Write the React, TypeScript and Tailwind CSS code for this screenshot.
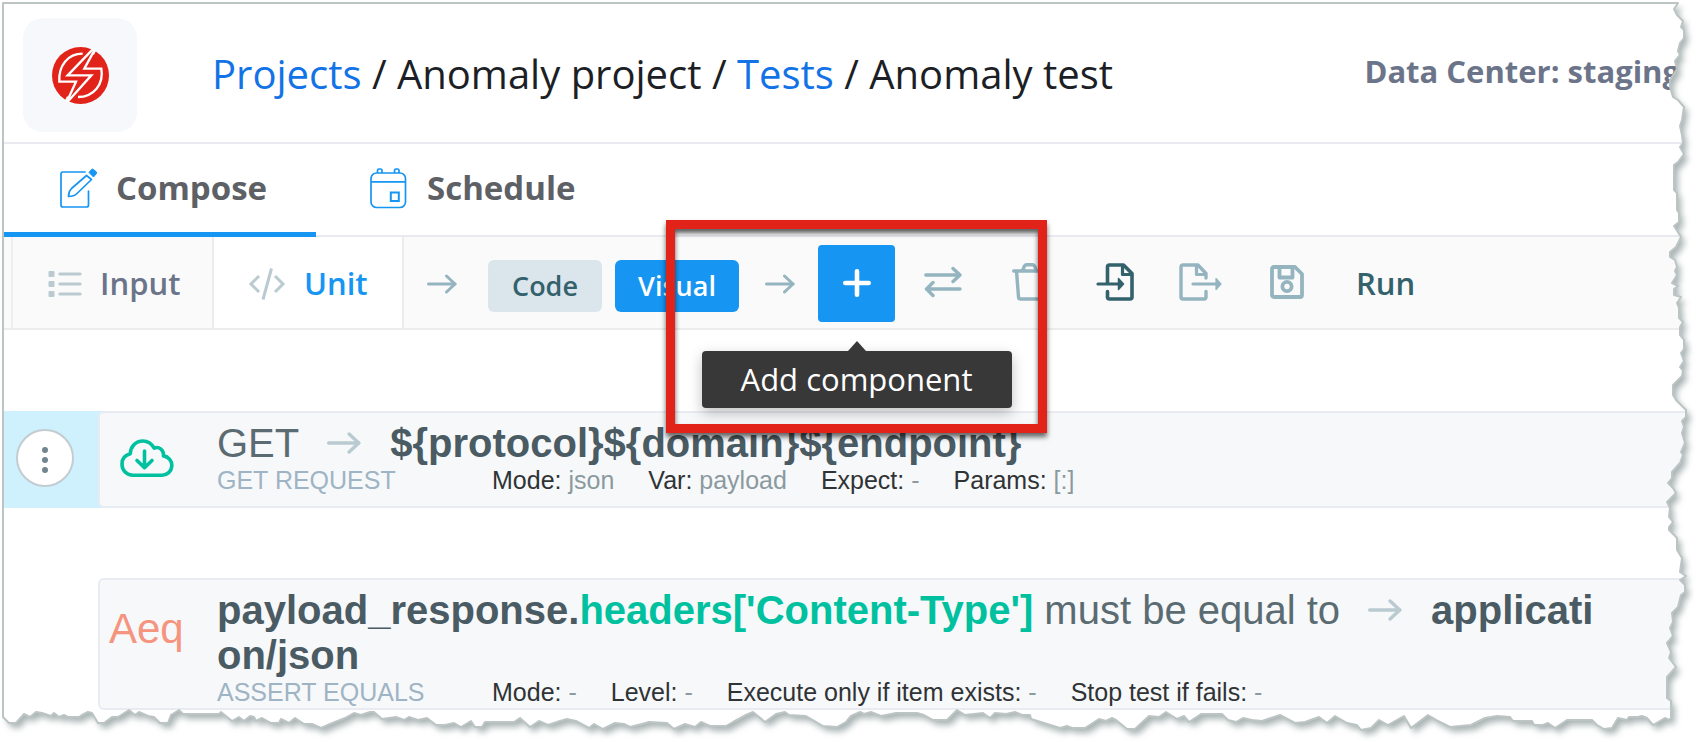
import type { ReactNode } from "react";

const TORN_EDGE =
  "L1678 3L1674 9L1677 15L1683 21L1681 27L1684 30V38L1680 43L1678 51L1680 55L1675 61L1677 69L1670 80V87L1673 97L1678 100L1684 107L1682 120L1680 126L1682 135L1683 143L1680 147L1684 154L1678 162L1674 165V190L1677 193V210L1679 213V222L1674 226L1681 237L1676 247L1670 252V257L1675 260L1677 267L1675 271L1677 275L1672 283L1678 286L1674 289V295L1681 297L1677 303L1679 308V318L1683 322L1680 327V335L1684 340V349L1681 353L1684 361L1680 367L1683 371L1682 376L1673 385V395L1676 400L1686 410V417L1682 421L1684 427L1682 433L1685 443L1681 452L1683 455L1680 463L1672 472V478L1668 483L1673 488L1676 493L1667 502L1670 508L1669 517L1673 522L1669 527V530L1677 538V550L1682 558L1680 572L1686 576L1680 580L1685 585V592L1681 595L1678 607L1672 613L1673 622L1670 628L1673 636L1667 643L1671 652L1669 658L1676 667L1667 677V698L1671 701V718L1669 720L1665 718L1653 725L1647 718L1642 716L1638 717H1629L1627 720L1618 718L1612 728L1604 729L1597 725L1592 720H1567L1555 728L1548 723L1543 725H1534L1532 721H1513L1510 717L1497 716L1485 718L1471 725L1450 727L1438 721L1428 715L1411 728L1404 716L1388 725L1379 720L1371 728L1361 730L1357 725L1347 723L1335 716L1327 723L1319 717L1305 722L1295 723L1280 715L1262 721L1252 720L1243 718L1236 722L1228 720L1222 714H1201L1189 722L1184 716L1177 719L1166 712L1159 717L1149 716L1135 729H1127L1116 720L1112 718L1106 721L1099 719L1085 728H1072L1067 726L1060 728L1044 723L1031 719L1030 715H1022L1015 712L1006 714L995 713L990 718L983 713L965 715L957 710L947 720H933L924 715L917 713H896L881 716L871 712L864 714L860 712L851 716L846 722L837 727L823 726L806 716L789 715L785 712L776 714L765 722L753 712L746 715L733 722L726 726H710L701 722L695 727L685 724L674 729L667 723L649 722L642 724L630 727L624 724L615 723L603 729L594 724L589 728L576 721L567 719L560 721L548 725L539 721L530 727L520 718L514 722H485L482 727H475L471 721L461 727L454 723L445 725H436L427 718L418 720L409 717L404 720L396 717L382 719L374 712H370L361 715L354 713L345 718L330 724L321 728L312 724H304L295 718L289 723L281 719L279 723H271L262 718L256 721L254 717L250 716L244 721L239 717L232 721L221 712L219 714H183L179 710L171 715L168 723H160L154 717L148 716L139 712L135 715L129 710L118 717H112L104 723H98L92 713L88 712L82 715L79 717H68L64 715L59 717L54 713L51 716L42 713L36 712L30 717L24 714L16 723H9L3 717";

const SHEET = `M3 3${TORN_EDGE}Z`;
const OUTSIDE = `M0 0H1700V742H0Z${SHEET}`;

function TornPaper() {
  return (
    <svg
      className="pointer-events-none absolute inset-0 h-full w-full"
      viewBox="0 0 1700 742"
      preserveAspectRatio="none"
      aria-hidden="true"
    >
      <defs>
        <clipPath id="outside">
          <path d={OUTSIDE} clipRule="evenodd" />
        </clipPath>
        <filter id="soften" x="-5%" y="-5%" width="110%" height="110%">
          <feGaussianBlur stdDeviation="3" />
        </filter>
      </defs>
      <path d={OUTSIDE} fillRule="evenodd" fill="#fff" />
      <g clipPath="url(#outside)">
        <path d={SHEET} transform="translate(4 5)" fill="#a9b3b3" filter="url(#soften)" />
        <path d="M0 0H1700V2H0ZM0 0H2V742H0Z" fill="#fff" />
      </g>
      <path d={SHEET} fill="none" stroke="#bdc5c4" strokeWidth="2" strokeLinejoin="round" />
    </svg>
  );
}

function Logo() {
  return (
    <svg className="h-[57px] w-[57px]" viewBox="156 141 171 171" aria-hidden="true">
      <circle cx="241.500" cy="226.500" r="85.500" fill="#e2231a" />
      <g fill="none" stroke="#fff" strokeWidth="7">
        <path d="M281 145L203 226H274L203 305" />
        <path d="M248 161C203 161 175 197 178 245H228L200 307" />
        <path d="M286 146L253 206H304C312 253 281 291 234 291" />
        <path d="M204 290L197 306M279 163L287 147" />
      </g>
    </svg>
  );
}

function ComposeIcon() {
  return (
    <svg className="h-[42px] w-10" viewBox="0 0 40 42" fill="none" stroke="#1695f2" strokeWidth="1.700" aria-hidden="true">
      <path d="M27 5H5Q3 5 3 7V38Q3 40 5 40H28.500Q30.500 40 30.500 38V24" strokeLinecap="round" />
      <path d="M28.500 8.500L13.500 21.500C11 24 10.500 27 10.500 29.500C13.500 29.500 17 28.500 19 26.500L33.500 12.500Z" strokeLinejoin="round" />
      <path d="M31 5.500L33.500 2.500Q34.500 1.500 35.500 2.500L38.500 5Q39 6 38 7L35.500 10Z" fill="#1695f2" strokeWidth="1" />
    </svg>
  );
}

function CalendarIcon() {
  return (
    <svg className="h-[42px] w-[39px]" viewBox="0 0 39 42" fill="none" stroke="#1695f2" strokeWidth="1.700" aria-hidden="true">
      <rect x="2" y="6" width="34.500" height="34.500" rx="5.500" />
      <path d="M2 14.800H36.500M8.500 6V3.500Q8.500 2 10 2H11.500Q13 2 13 3.500V6M25.500 6V3.500Q25.500 2 27 2H28.500Q30 2 30 3.500V6" />
      <rect x="21.800" y="25.500" width="8" height="8.500" strokeWidth="2" />
    </svg>
  );
}

function ListIcon() {
  return (
    <svg className="h-7 w-[34px]" viewBox="0 0 34 28" aria-hidden="true">
      <g fill="#b9cad1">
        <rect x="0.500" y="1" width="6" height="6" rx="1" />
        <rect x="0.500" y="11" width="6" height="6" rx="1" />
        <rect x="0.500" y="21" width="6" height="6" rx="1" />
      </g>
      <path d="M12 4H32M12 14H32M12 24H32" stroke="#b9cad1" strokeWidth="3.200" strokeLinecap="round" />
    </svg>
  );
}

function CodeIcon() {
  return (
    <svg className="h-[34px] w-[38px]" viewBox="0 0 38 34" fill="none" stroke="#b9cad1" strokeWidth="3" aria-hidden="true">
      <path d="M11 9L3 17L11 25M27 9L35 17L27 25M23.500 1.500L15 32.500" />
    </svg>
  );
}

function ArrowIcon({ className }: { className: string }) {
  return (
    <svg className={className} viewBox="0 0 30 20" fill="none" stroke="currentColor" strokeWidth="3" strokeLinecap="round" aria-hidden="true">
      <path d="M1.500 10H28" />
      <path d="M19.500 2L28 10L19.500 18" strokeLinejoin="round" />
    </svg>
  );
}

function PlusIcon() {
  return (
    <svg className="h-7 w-7" viewBox="0 0 28 28" stroke="#fff" strokeWidth="4.600" strokeLinecap="round" aria-hidden="true">
      <path d="M14 2.300V25.700M2.300 14H25.700" />
    </svg>
  );
}

function SwapIcon() {
  return (
    <svg className="h-8 w-[38px]" viewBox="0 0 38 32" fill="none" stroke="currentColor" strokeWidth="3.400" strokeLinecap="round" strokeLinejoin="round" aria-hidden="true">
      <path d="M1.800 9H36M29 2.500L36 9L29 15.500M36 23H2.500M9 16.500L2.500 23L9 29.500" />
    </svg>
  );
}

function TrashIcon() {
  return (
    <svg className="h-[38px] w-[35px]" viewBox="0 0 35 38" fill="none" stroke="currentColor" strokeWidth="3.400" strokeLinecap="round" strokeLinejoin="round" aria-hidden="true">
      <path d="M1.700 8H33.300M4.500 8L6.500 34Q6.700 36 8.500 36H26.500Q28.300 36 28.500 34L30.500 8M10.500 7.500L12.500 3Q13.200 1.700 14.500 1.700H20.500Q21.800 1.700 22.500 3L24.500 7.500" />
    </svg>
  );
}

function ImportIcon() {
  return (
    <svg className="h-[38px] w-[38px]" viewBox="0 0 38 38" fill="none" stroke="currentColor" strokeWidth="3.600" strokeLinecap="round" strokeLinejoin="round" aria-hidden="true">
      <path d="M11.500 20V4Q11.500 2 13.500 2H27.500L36 10.500V34Q36 36 34 36H13.500Q11.500 36 11.500 34V28.500" />
      <path d="M26.500 3V11.500H35M2 21H24" strokeWidth="3.200" />
      <path d="M22.500 15.500L27.500 21L22.500 26.500Z" fill="currentColor" strokeWidth="1.500" />
    </svg>
  );
}

function ExportIcon() {
  return (
    <svg className="h-[38px] w-[43px]" viewBox="0 0 43 38" fill="none" stroke="currentColor" strokeWidth="3.400" strokeLinecap="round" strokeLinejoin="round" aria-hidden="true">
      <path d="M27 15V10.500L19 2H4Q2 2 2 4V34Q2 36 4 36H25Q27 36 27 34V28.500" />
      <path d="M17.500 3V11.500H26M14 21H38" strokeWidth="3.200" />
      <path d="M37 15.500L42 21L37 26.500Z" fill="currentColor" strokeWidth="1.200" />
    </svg>
  );
}

function SaveIcon() {
  return (
    <svg className="h-[34px] w-[34px]" viewBox="0 0 34 34" fill="none" stroke="currentColor" strokeWidth="3.800" strokeLinejoin="round" aria-hidden="true">
      <path d="M4 2H25L32 9V30Q32 32 30 32H4Q2 32 2 30V4Q2 2 4 2Z" />
      <path d="M9.500 2.500V12.500H22.500V2.500" />
      <circle cx="17" cy="21.500" r="4.600" />
    </svg>
  );
}

function CloudDownIcon() {
  return (
    <svg className="h-[38px] w-[54px]" viewBox="0 0 54 38" fill="none" stroke="#00c19f" strokeWidth="3.600" strokeLinecap="round" strokeLinejoin="round" aria-hidden="true">
      <path d="M13 36.200H42A9.700 9.700 0 0 0 43.500 16.900C44 10.500 38.500 7.200 34.200 9.200C31.500 4.500 27.500 2 23 2C15.500 2 10.500 8 10.300 14.800C5.500 16 2 19.500 2 25C2 31.500 6.500 36.200 13 36.200Z" />
      <path d="M24.500 12V28M17 21.500L24.500 28.700L32 21.500" />
    </svg>
  );
}

function Meta({ label, children }: { label: string; children: ReactNode }) {
  return (
    <span>
      {label}: <span className="text-[#8b9a9f]">{children}</span>
    </span>
  );
}

export default function App() {
  return (
    <div className="relative min-h-screen overflow-hidden bg-white pt-1 pl-1 font-['Open_Sans',sans-serif]">
      <header className="flex items-center border-b-2 border-[#e9eaf1] pt-3.5 pr-5 pb-2.5 pl-[19px]">
        <a href="#home" aria-label="Home" className="flex h-[114px] w-[114px] shrink-0 items-center justify-center rounded-[20px] bg-[#f7f8fb]">
          <Logo />
        </a>
        <nav className="ml-[75px] flex-1 pb-0.5 text-[40px] leading-[48px] whitespace-nowrap text-[#1d1f26]" aria-label="Breadcrumb">
          <a href="#projects" className="text-[#1273e6]">Projects</a> / Anomaly project /{" "}
          <a href="#tests" className="text-[#1273e6]">Tests</a> / Anomaly test
        </nav>
        <span className="pb-2 text-[31px] leading-9 font-bold whitespace-nowrap text-[#6b7489]">Data Center: staging</span>
      </header>

      <nav className="flex h-[93px] border-b-2 border-[#e9eaf1] text-[33px] font-bold text-[#5d6065]" aria-label="Test views">
        <a href="#compose" className="-mb-0.5 flex w-[312px] items-center gap-[18px] border-b-[5px] border-[#1695f2] pl-[54px]">
          <ComposeIcon />
          Compose
        </a>
        <a href="#schedule" className="flex items-center gap-[19px] pb-[3px] pl-[53px]">
          <CalendarIcon />
          Schedule
        </a>
      </nav>

      <div className="flex h-[93px] items-stretch border-b-2 border-[#ececec] bg-[#fafafa] text-[31px] font-semibold">
        <div className="w-[9px] border-r-2 border-[#efefef]" />
        <button type="button" className="flex w-[201px] items-center gap-[18px] border-r-2 border-[#ececec] pt-0.5 pl-[35px] text-[#6b7489]">
          <ListIcon />
          Input
        </button>
        <button type="button" className="flex w-[190px] items-center gap-[18px] border-r-2 border-[#ececec] bg-white pt-0.5 pl-[34px] text-[#1695f2]">
          <CodeIcon />
          Unit
        </button>
        <div className="flex items-center pt-0.5 pl-[23px] text-[#94b4c0]">
          <ArrowIcon className="h-5 w-[30px]" />
          <div className="ml-[31px] flex gap-[13px] pt-1 text-[27px]">
            <button type="button" className="h-[52px] w-[114px] rounded-md bg-[#dbe6ec] pt-0.5 text-[#33616c]">Code</button>
            <button type="button" className="h-[52px] w-[124px] rounded-md bg-[#1695f2] pt-0.5 text-white">Visual</button>
          </div>
          <ArrowIcon className="ml-[26px] h-5 w-[30px]" />
          <div className="relative ml-[23px] shrink-0">
            <button type="button" aria-label="Add" aria-describedby="add-tip" className="flex h-[77px] w-[77px] items-center justify-center rounded bg-[#1695f2] pb-0.5">
              <PlusIcon />
            </button>
            <div id="add-tip" role="tooltip" className="absolute top-[106px] left-1/2 z-10 flex h-[57px] w-[310px] -translate-x-1/2 items-center justify-center rounded bg-[#383838] text-[31px] font-normal whitespace-nowrap text-white shadow-[0_5px_14px_rgba(0,0,0,0.25)]">
              <svg className="absolute -top-2.5 left-1/2 h-2.5 w-[18px] -translate-x-1/2" viewBox="0 0 18 10" aria-hidden="true">
                <path d="M0 10L9 0L18 10Z" fill="#383838" />
              </svg>
              Add component
            </div>
            <div className="pointer-events-none absolute -top-[25px] -left-[152px] z-20 h-[213px] w-[381px] border-[9px] border-[#e2231a] shadow-[0_4px_5px_rgba(0,0,0,0.6),inset_0_4px_5px_rgba(0,0,0,0.65)]" />
          </div>
          <button type="button" aria-label="Swap" className="ml-[29px] pb-1"><SwapIcon /></button>
          <button type="button" aria-label="Delete" className="ml-[50px] pb-1"><TrashIcon /></button>
          <button type="button" aria-label="Import" className="ml-[49px] pb-1 text-[#33616c]"><ImportIcon /></button>
          <button type="button" aria-label="Export" className="ml-[45px] pb-1"><ExportIcon /></button>
          <button type="button" aria-label="Save" className="ml-12 pb-1"><SaveIcon /></button>
          <button type="button" className="ml-[52px] text-[#33616c]">Run</button>
        </div>
      </div>

      <main className="flex flex-col gap-[70px] pt-[81px] pb-8 font-['Liberation_Sans',sans-serif]">
        <section className="flex bg-linear-to-r from-[#cff1fe] from-[104px] to-white to-[104px]">
          <div className="flex w-[94px] shrink-0 items-center pb-1 pl-3">
            <button type="button" aria-label="More actions" className="flex h-[58px] w-[58px] flex-col items-center justify-center gap-1 rounded-full border-2 border-[#c3ccd0] bg-white pt-1">
              <span className="h-1.5 w-1.5 rounded-full bg-[#71868f]" />
              <span className="h-1.5 w-1.5 rounded-full bg-[#71868f]" />
              <span className="h-1.5 w-1.5 rounded-full bg-[#71868f]" />
            </button>
          </div>
          <article className="flex flex-1 rounded-md border-2 border-[#e9ebf2] bg-[#f7f8fa] pt-2 pb-3">
            <div className="flex w-[117px] shrink-0 items-center pl-5">
              <CloudDownIcon />
            </div>
            <div className="flex-1 pr-[100px]">
              <h2 className="text-[40px] leading-[45px] text-[#5b6b72]">
                GET
                <ArrowIcon className="mr-[29px] ml-7 inline h-6 w-[34px] align-[2px] text-[#b9cad1]" />
                <b className="text-[#4a5b63]">{"${protocol}${domain}${endpoint}"}</b>
              </h2>
              <div className="flex text-[25px] leading-7 text-[#303335]">
                <span className="w-[275px] text-[#9eb4c4]">GET REQUEST</span>
                <div className="flex gap-[34px]">
                  <Meta label="Mode">json</Meta>
                  <Meta label="Var">payload</Meta>
                  <Meta label="Expect">-</Meta>
                  <Meta label="Params">[:]</Meta>
                </div>
              </div>
            </div>
          </article>
        </section>

        <section className="flex pl-[94px]">
          <article className="flex flex-1 rounded-md border-2 border-[#e9ebf2] bg-[#f7f8fa] pt-2">
            <div className="w-[117px] shrink-0 pt-[18px] pl-[9px] text-[42px] leading-[45px] text-[#f5947f]">Aeq</div>
            <div className="flex-1 pr-[100px] pb-0.5">
              <h2 className="text-[40px] leading-[45px] break-all text-[#5b6b72]">
                <b className="text-[#4a5b63]">payload_response.</b>
                <b className="text-[#00c19f]">headers['Content-Type']</b> must be equal to
                <ArrowIcon className="mr-[29px] ml-7 inline h-6 w-[34px] align-[2px] text-[#b9cad1]" />
                <b className="text-[#4a5b63]">applicati</b>
                <wbr />
                <b className="text-[#4a5b63]">on/json</b>
              </h2>
              <div className="flex text-[25px] leading-7 text-[#303335]">
                <span className="w-[275px] text-[#9eb4c4]">ASSERT EQUALS</span>
                <div className="flex gap-[34px]">
                  <Meta label="Mode">-</Meta>
                  <Meta label="Level">-</Meta>
                  <Meta label="Execute only if item exists">-</Meta>
                  <Meta label="Stop test if fails">-</Meta>
                </div>
              </div>
            </div>
          </article>
        </section>
      </main>

      <TornPaper />
    </div>
  );
}
